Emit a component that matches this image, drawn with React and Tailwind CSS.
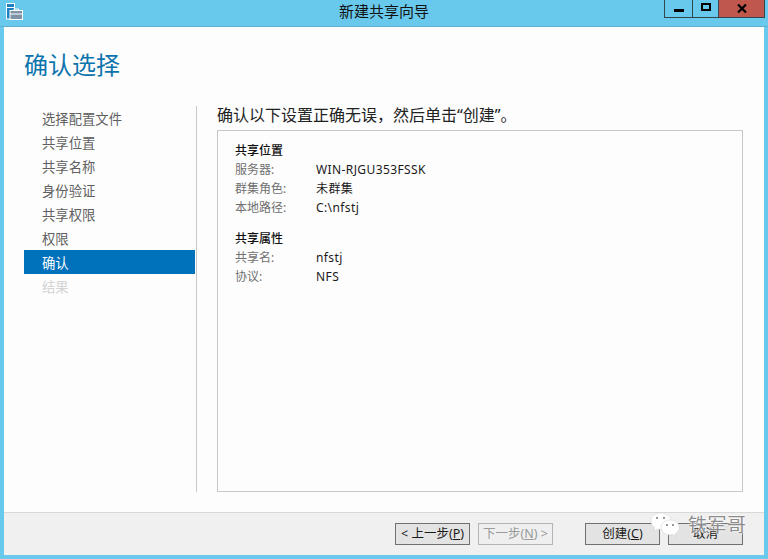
const steps = ['选择配置文件', '共享位置', '共享名称', '身份验证', '共享权限', '权限', '确认', '结果'];
const font = 'font-["Noto_Sans","Noto_Sans_CJK_SC",sans-serif]';

function Row({ label, value }) {
  return (
    <div className="flex h-[19px] items-center text-[12px] leading-[19px]">
      <span className="w-[81px] text-[#707070]">{label}</span>
      <span className="tracking-[0.4px] text-[#1a1a1a]">{value}</span>
    </div>
  );
}

function WizardButton({ children, disabled }) {
  return (
    <button className={`flex h-[22px] w-[75px] items-center justify-center border pt-[1px] text-[12.5px] ${disabled ? 'border-[#b5b5b5] bg-[#efefef] text-[#9a9a9a]' : 'border-[#707070] bg-[#e3e3e3] text-[#1a1a1a]'}`}>
      {children}
    </button>
  );
}

export default function App() {
  return (
    <div className={`flex h-[559px] w-[768px] flex-col overflow-hidden bg-[#69c9ec] ${font}`}>
      {/* title bar */}
      <div className="relative flex h-[27px] shrink-0 justify-center border-b border-[#62b0cf] pt-[1px]">
        <svg className="absolute left-[6px] top-[3px]" width="17" height="17" viewBox="0 0 17 17">
          <rect x="0.5" y="0.5" width="8" height="15.500" fill="#1f7fc4" stroke="#fff" />
          <rect x="1" y="4" width="7" height="1" fill="#fff" />
          <rect x="4" y="7.500" width="12.500" height="9" fill="#7f93a8" stroke="#fff" />
          <path d="M8 7.500V6h4.500v1.500M4 11h12.500" fill="none" stroke="#fff" />
        </svg>
        <span className="text-[15px] leading-[20px] text-[#111]">新建共享向导</span>
        <div className="absolute left-[664px] top-0 flex h-[18px] border-x border-b border-[#33464d]">
          <div className="flex w-[28px] items-center justify-center border-r border-[#33464d]">
            <div className="mt-[3px] h-[3px] w-[10px] bg-black" />
          </div>
          <div className="flex w-[26px] items-center justify-center border-r border-[#33464d]">
            <div className="mb-[3px] h-[8px] w-[10px] border-2 border-black" />
          </div>
          <div className="flex w-[45px] items-center justify-center bg-[#c0574c]">
            <svg width="10" height="9" viewBox="0 0 10 9" className="mb-[1px]">
              <path d="M1 0.5L9 8.500M9 0.5L1 8.500" stroke="#000" strokeWidth="2.2" />
            </svg>
          </div>
        </div>
      </div>

      {/* window body */}
      <div className="ml-[4px] flex h-[528px] w-[760px] flex-col bg-[#fdfdfd]">
        <div className="flex h-[79px] shrink-0 items-start pl-[20px] pt-[20px] text-[24px] leading-[36px] text-[#0b74ad]">确认选择</div>
        <div className="flex min-h-0 flex-1 pb-[20px]">
          <div className="ml-[20px] w-[171px] text-[13.33px] text-[#5f5f5f]">
            {steps.map((s) => (
              <div key={s} className={`h-[24px] pl-[18px] pt-[1px] leading-[24px] ${s === '确认' ? 'bg-[#0072bc] text-white' : s === '结果' ? 'text-[#d4d4d4]' : ''}`}>{s}</div>
            ))}
          </div>
          <div className="ml-[1px] w-[1px] bg-[#c8c8c8]" />
          <div className="ml-[20px] flex w-[526px] flex-col">
            <div className="h-[24px] text-[16px] leading-[18px] text-[#222]">确认以下设置正确无误，然后单击“创建”。</div>
            <div className="flex-1 border border-[#c8c8c8] px-[17px] pt-[10px]">
              <div className="h-[19px] text-[12px] font-medium leading-[19px] text-[#111]">共享位置</div>
              <Row label="服务器:" value="WIN-RJGU353FSSK" />
              <Row label="群集角色:" value="未群集" />
              <Row label="本地路径:" value="C:\nfstj" />
              <div className="mt-[12px] h-[19px] text-[12px] font-medium leading-[19px] text-[#111]">共享属性</div>
              <Row label="共享名:" value="nfstj" />
              <Row label="协议:" value="NFS" />
            </div>
          </div>
        </div>
        <div className="relative flex h-[43px] shrink-0 items-start border-t border-[#d8d8d8] bg-[#f0f0f0] pl-[391px] pt-[10px]">
          <div className="flex gap-[8px]">
            <WizardButton>&lt; 上一步(<u>P</u>)</WizardButton>
            <WizardButton disabled>下一步(<u>N</u>) &gt;</WizardButton>
          </div>
          <div className="ml-[32px] flex gap-[8px]">
            <WizardButton>创建(<u>C</u>)</WizardButton>
            <WizardButton>取消</WizardButton>
          </div>
          {/* watermark */}
          <div className="absolute left-[646px] top-[-1px] flex items-center">
            <svg width="32" height="26" viewBox="0 0 32 26">
              <path d="M11 1c-6 0-10 3-10 8 0 3 1.500 5 3.500 6.500L4 19l4-2c1 .3 2 .4 3 .4 6 0 10-3.500 10-8S17 1 11 1z" fill="#fff" stroke="#d0d0d0" strokeWidth="0.5" />
              <path d="M20 8c-5 0-9 3-9 7.500s4 7.500 9 7.500c1 0 2-.1 3-.4l3 2-.5-3c2-1.400 4-3.600 4-6.100C29.500 11 25 8 20 8z" fill="#fff" stroke="#c8c8c8" strokeWidth="0.5" />
              <circle cx="7" cy="6" r="1" fill="#777" />
              <circle cx="14" cy="6" r="1" fill="#777" />
              <circle cx="17" cy="13" r="1" fill="#777" />
              <circle cx="23" cy="13" r="1" fill="#777" />
            </svg>
            <span className="ml-[6px] text-[19px] leading-[24px] tracking-[0.5px] text-[#8c8c8c] [text-shadow:0_0_2px_#fff,0_0_2px_#fff,0_0_1px_#fff]">铁军哥</span>
          </div>
        </div>
      </div>
    </div>
  );
}
